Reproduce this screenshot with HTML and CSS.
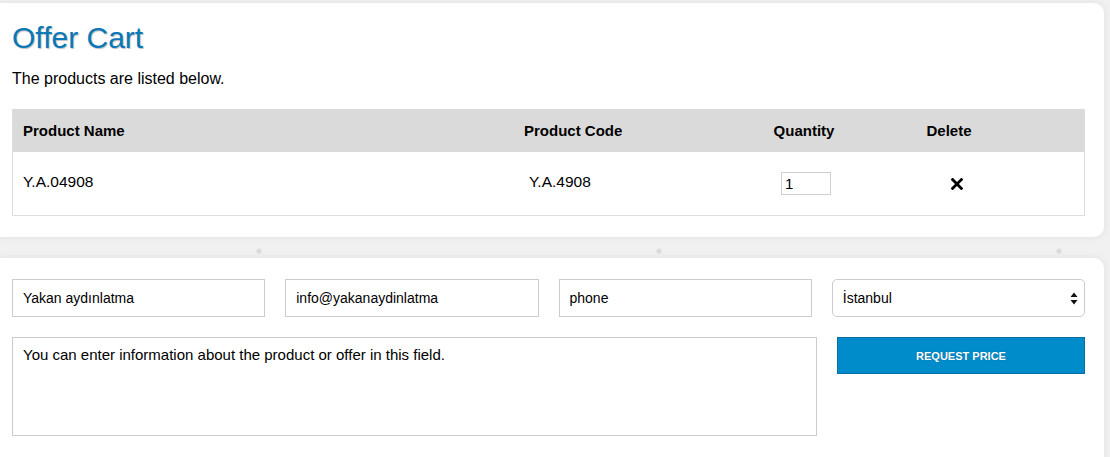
FILE: index.html
```html
<!DOCTYPE html>
<html lang="en">
<head>
<meta charset="utf-8">
<title>Offer Cart</title>
<link rel="stylesheet" href="styles.css">
</head>
<body>
<div class="page">
  <section class="card cart">
    <h1 class="title">Offer Cart</h1>
    <p class="lead">The products are listed below.</p>
    <div class="table">
      <div class="thead">
        <div class="cell name">Product Name</div>
        <div class="cell code">Product Code</div>
        <div class="cell qty">Quantity</div>
        <div class="cell del">Delete</div>
        <div class="cell"></div>
      </div>
      <div class="trow">
        <div class="cell name txt">Y.A.04908</div>
        <div class="cell code txt data-code">Y.A.4908</div>
        <div class="cell qty"><input class="qty-input" type="text" value="1"></div>
        <div class="cell del"><button class="del-btn" type="button" aria-label="Delete"><svg width="12" height="12" viewBox="0 0 12 12"><path d="M1.6 1.6 L10.4 10.4 M10.4 1.6 L1.6 10.4" stroke="#000" stroke-width="2.8" stroke-linecap="square"/></svg></button></div>
        <div class="cell"></div>
      </div>
    </div>
  </section>
  <div class="gap"></div>
  <section class="card form">
    <div class="fields">
      <input class="field" type="text" value="Yakan aydınlatma">
      <input class="field" type="text" value="info@yakanaydinlatma">
      <input class="field" type="text" value="phone">
      <div class="select-wrap">
        <select class="select"><option>İstanbul</option></select>
        <svg class="arrows" width="8" height="13" viewBox="0 0 8 13"><path d="M0.5 5 L4 0.5 L7.5 5 Z M0.5 8 L4 12.5 L7.5 8 Z" fill="#111"/></svg>
      </div>
    </div>
    <div class="row2">
      <textarea class="note">You can enter information about the product or offer in this field.</textarea>
      <button class="submit" type="button">REQUEST PRICE</button>
    </div>
  </section>
</div>
</body>
</html>
```
FILE: styles.css
```css
* { box-sizing: border-box; }
html, body { margin: 0; padding: 0; }
body {
  font-family: "Liberation Sans", Arial, sans-serif;
  color: #000;
  background-color: #f1f1f2;
  background-image: radial-gradient(circle at 200px 200px, #dcdcdd 0, #dcdcdd 2.2px, rgba(220,220,221,0) 3px);
  background-size: 400px 400px;
  background-position: 59px 51px;
  overflow: hidden;
  height: 457px;
}
.page {
  padding-top: 3px;
  padding-right: 6px;
  margin-left: -10px;
}
.card {
  background: #fff;
  border-radius: 10px;
  box-shadow: 0 0 8px rgba(0,0,0,0.07);
}
.cart {
  padding: 18px 19px 21px 22px;
}
.title {
  margin: 0;
  font-size: 30px;
  line-height: 34px;
  font-weight: normal;
  color: #0a78b6;
  text-shadow: 1px 1px 1px rgba(0,0,0,0.25);
}
.lead {
  margin: 15px 0 0;
  font-size: 16px;
  line-height: 18px;
}
.table {
  margin-top: 21px;
  border: 1px solid #dedede;
  border-top: 0;
}
.thead, .trow {
  display: grid;
  grid-template-columns: 501px 220px 140px 150px 1fr;
  align-items: center;
}
.thead {
  background: #dadada;
  height: 43px;
  font-weight: bold;
  font-size: 15px;
}
.trow {
  height: 63px;
  font-size: 15.5px;
}
.cell.name, .cell.code { padding-left: 10px; }
.cell.qty, .cell.del { text-align: center; }
.txt { padding-bottom: 3px; }
.data-code { padding-left: 15px !important; }
.qty-input {
  display: block;
  margin: 0 auto;
  position: relative;
  left: 2px;
  width: 50px;
  height: 23px;
  border: 1px solid #cfcfcf;
  padding: 0 3px;
  font-family: "Liberation Sans", Arial, sans-serif;
  font-size: 15px;
  color: #000;
  outline: none;
}
.del-btn {
  display: block;
  margin: 0 auto;
  padding: 0;
  border: 0;
  background: none;
  position: relative;
  left: 8px;
  width: 12px;
  height: 12px;
  line-height: 0;
}
.gap { height: 21px; }
.form {
  padding: 21px 19px 30px 22px;
  border-radius: 10px;
}
.fields {
  display: grid;
  grid-template-columns: repeat(4, 1fr);
  column-gap: 20px;
}
.field, .select-wrap {
  height: 38px;
  border: 1px solid #cccccc;
  font-family: "Liberation Sans", Arial, sans-serif;
  font-size: 14px;
  color: #000;
}
.field {
  padding: 0 10px;
  outline: none;
}
.select-wrap {
  display: flex;
  align-items: center;
  border-radius: 5px;
  padding: 0 6px 0 10px;
}
.select {
  flex: 1;
  appearance: none;
  -webkit-appearance: none;
  border: 0;
  background: transparent;
  padding: 0;
  font-family: inherit;
  font-size: 14px;
  color: #000;
  outline: none;
}
.arrows { display: block; }
.row2 {
  display: flex;
  gap: 20px;
  margin-top: 20px;
  align-items: flex-start;
}
.note {
  flex: 1;
  height: 99px;
  border: 1px solid #cccccc;
  padding: 8px 10px;
  font-family: "Liberation Sans", Arial, sans-serif;
  font-size: 15px;
  color: #000;
  resize: none;
  outline: none;
}
.submit {
  width: 248px;
  height: 37px;
  background: #008bcb;
  border: 1px solid #0a6ea4;
  color: #fff;
  font-family: "Liberation Sans", Arial, sans-serif;
  font-weight: bold;
  font-size: 11px;
  text-shadow: 0 0 1px rgba(0,0,0,0.35);
  padding: 0;
}
```
